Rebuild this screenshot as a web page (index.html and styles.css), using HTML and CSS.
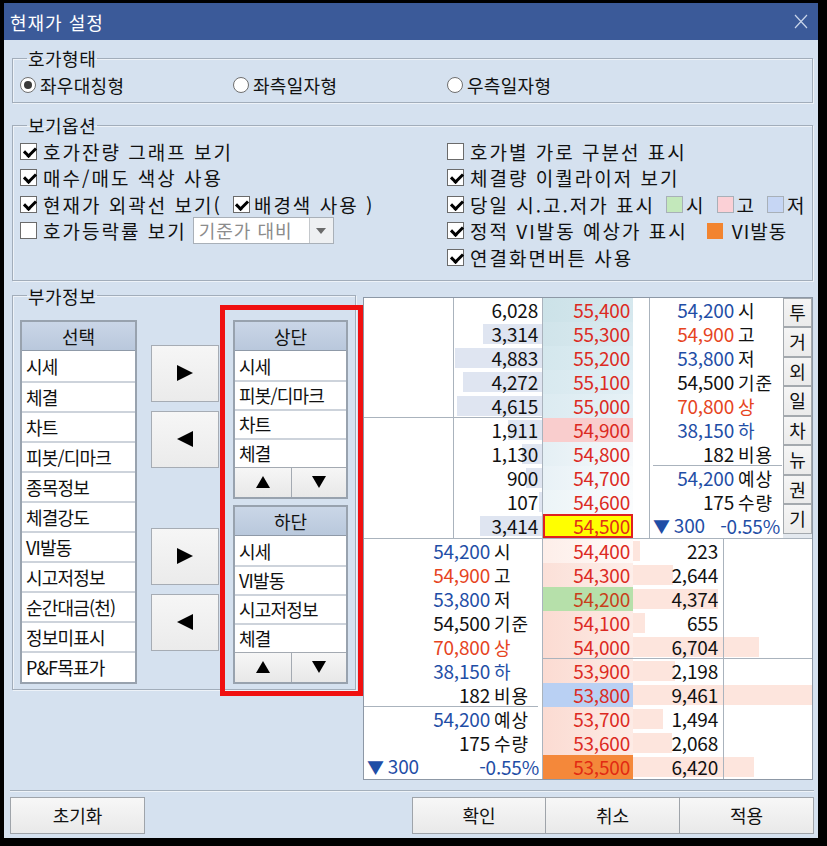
FILE: index.html
```html
<!DOCTYPE html>
<html lang="ko">
<head>
  <meta charset="UTF-8">
  <meta name="viewport" content="width=device-width, initial-scale=1">
  <title>현재가 설정</title>
  <link rel="stylesheet" href="styles.css">
</head>
<body>
  <div class="window">
    <div class="titlebar">
      <span class="title">현재가 설정</span>
      <svg class="close" width="14" height="15" viewBox="0 0 14 15"><path d="M1 1L13 14M13 1L1 14" stroke="#c9d5ea" stroke-width="1.2" fill="none"/></svg>
    </div>

    <div class="content">
      <!-- 호가형태 -->
      <fieldset class="group type-group">
        <legend>호가형태</legend>
        <div class="radios">
          <div class="radio on"><i></i>좌우대칭형</div>
          <div class="radio"><i></i>좌측일자형</div>
          <div class="radio"><i></i>우측일자형</div>
        </div>
      </fieldset>

      <!-- 보기옵션 -->
      <fieldset class="group view-group">
        <legend>보기옵션</legend>
        <div class="opts">
          <div class="col">
            <div class="opt"><i class="chk on"></i>호가잔량 그래프 보기</div>
            <div class="opt"><i class="chk on"></i>매수/매도 색상 사용</div>
            <div class="opt"><i class="chk on"></i>현재가 외곽선 보기(<i class="chk on inner"></i>배경색 사용 )</div>
            <div class="opt"><i class="chk"></i>호가등락률 보기<div class="combo"><span>기준가 대비</span><b></b></div></div>
          </div>
          <div class="col">
            <div class="opt"><i class="chk"></i>호가별 가로 구분선 표시</div>
            <div class="opt"><i class="chk on"></i>체결량 이퀄라이저 보기</div>
            <div class="opt"><i class="chk on"></i>당일 시.고.저가 표시<i class="sw open first"></i>시<i class="sw high"></i>고<i class="sw low"></i>저</div>
            <div class="opt"><i class="chk on"></i>정적 VI발동 예상가 표시<i class="sw vi"></i><span class="vi-txt">VI발동</span></div>
            <div class="opt"><i class="chk on"></i>연결화면버튼 사용</div>
          </div>
        </div>
      </fieldset>

      <div class="extra">
        <!-- 부가정보 -->
        <fieldset class="group extra-group">
          <legend>부가정보</legend>
          <div class="lists">
            <div class="list pick">
              <div class="head">선택</div>
              <div class="item">시세</div>
              <div class="item">체결</div>
              <div class="item">차트</div>
              <div class="item">피봇/디마크</div>
              <div class="item">종목정보</div>
              <div class="item">체결강도</div>
              <div class="item">VI발동</div>
              <div class="item">시고저정보</div>
              <div class="item">순간대금(천)</div>
              <div class="item">정보미표시</div>
              <div class="item">P&amp;F목표가</div>
            </div>

            <div class="movers">
              <div class="mv add"><i></i></div>
              <div class="mv del"><i></i></div>
              <div class="mv add second"><i></i></div>
              <div class="mv del"><i></i></div>
            </div>

            <div class="slots">
              <div class="list slot">
                <div class="head">상단</div>
                <div class="item">시세</div>
                <div class="item">피봇/디마크</div>
                <div class="item">차트</div>
                <div class="item">체결</div>
                <div class="updown"><span class="up"><i></i></span><span class="down"><i></i></span></div>
              </div>
              <div class="list slot">
                <div class="head">하단</div>
                <div class="item">시세</div>
                <div class="item">VI발동</div>
                <div class="item">시고저정보</div>
                <div class="item">체결</div>
                <div class="updown"><span class="up"><i></i></span><span class="down"><i></i></span></div>
              </div>
            </div>
          </div>
        </fieldset>

        <!-- 호가 미리보기 -->
        <div class="book">
          <div class="half top">
            <div class="blank"><div class="blk"></div><div class="blk"></div></div>

            <div class="asks">
              <div class="r"><span class="n">6,028</span></div>
              <div class="r"><b class="bar" style="width:59px"></b><span class="n">3,314</span></div>
              <div class="r"><b class="bar" style="width:87px"></b><span class="n">4,883</span></div>
              <div class="r"><b class="bar" style="width:79px"></b><span class="n">4,272</span></div>
              <div class="r sep5"><b class="bar" style="width:85px"></b><span class="n">4,615</span></div>
              <div class="r"><b class="bar" style="width:34px"></b><span class="n">1,911</span></div>
              <div class="r"><b class="bar" style="width:20px"></b><span class="n">1,130</span></div>
              <div class="r"><b class="bar" style="width:16px"></b><span class="n">900</span></div>
              <div class="r"><b class="bar" style="width:3px"></b><span class="n">107</span></div>
              <div class="r"><b class="bar" style="width:62px"></b><span class="n">3,414</span></div>
            </div>

            <div class="prices">
              <div class="r p a1">55,400</div>
              <div class="r p a2">55,300</div>
              <div class="r p a3">55,200</div>
              <div class="r p a4">55,100</div>
              <div class="r p a5">55,000</div>
              <div class="r p hi">54,900</div>
              <div class="r p a7">54,800</div>
              <div class="r p a8">54,700</div>
              <div class="r p a9">54,600</div>
              <div class="r p cur">54,500</div>
            </div>

            <div class="pad"></div>

            <div class="info short">
              <div class="r"><span class="n blue">54,200</span><span class="lb">시</span></div>
              <div class="r"><span class="n red">54,900</span><span class="lb">고</span></div>
              <div class="r"><span class="n blue">53,800</span><span class="lb">저</span></div>
              <div class="r"><span class="n">54,500</span><span class="lb">기준</span></div>
              <div class="r"><span class="n red">70,800</span><span class="lb red">상</span></div>
              <div class="r"><span class="n blue">38,150</span><span class="lb blue">하</span></div>
              <div class="r sep7"><span class="n">182</span><span class="lb">비용</span></div>
              <div class="r"><span class="n blue">54,200</span><span class="lb">예상</span></div>
              <div class="r"><span class="n">175</span><span class="lb">수량</span></div>
              <div class="r chg"><span class="blue"><em>▼</em> 300</span><span class="blue">-0.55%</span></div>
            </div>

            <div class="tabs">
              <div class="tab">투</div>
              <div class="tab">거</div>
              <div class="tab">외</div>
              <div class="tab">일</div>
              <div class="tab">차</div>
              <div class="tab">뉴</div>
              <div class="tab">권</div>
              <div class="tab">기</div>
            </div>
          </div>

          <div class="half bottom">
            <div class="info wide">
              <div class="r"><span class="n blue">54,200</span><span class="lb">시</span></div>
              <div class="r"><span class="n red">54,900</span><span class="lb">고</span></div>
              <div class="r"><span class="n blue">53,800</span><span class="lb">저</span></div>
              <div class="r"><span class="n">54,500</span><span class="lb">기준</span></div>
              <div class="r"><span class="n red">70,800</span><span class="lb red">상</span></div>
              <div class="r"><span class="n blue">38,150</span><span class="lb blue">하</span></div>
              <div class="r sep7"><span class="n">182</span><span class="lb">비용</span></div>
              <div class="r"><span class="n blue">54,200</span><span class="lb">예상</span></div>
              <div class="r"><span class="n">175</span><span class="lb">수량</span></div>
              <div class="r chg"><span class="blue"><em>▼</em> 300</span><span class="blue">-0.55%</span></div>
            </div>

            <div class="prices">
              <div class="r p b1">54,400</div>
              <div class="r p b2">54,300</div>
              <div class="r p open">54,200</div>
              <div class="r p bid">54,100</div>
              <div class="r p bid sep5">54,000</div>
              <div class="r p bid">53,900</div>
              <div class="r p low">53,800</div>
              <div class="r p bid">53,700</div>
              <div class="r p bid">53,600</div>
              <div class="r p vi">53,500</div>
            </div>

            <div class="bids">
              <div class="r"><b class="bar" style="width:7px"></b><span class="n">223</span></div>
              <div class="r"><b class="bar" style="width:40px"></b><span class="n">2,644</span></div>
              <div class="r"><b class="bar" style="width:85px"></b><span class="n">4,374</span></div>
              <div class="r"><b class="bar" style="width:12px"></b><span class="n">655</span></div>
              <div class="r sep5"><b class="bar" style="width:126px"></b><span class="n">6,704</span></div>
              <div class="r"><b class="bar" style="width:42px"></b><span class="n">2,198</span></div>
              <div class="r"><b class="bar" style="width:179px"></b><span class="n">9,461</span></div>
              <div class="r"><b class="bar" style="width:30px"></b><span class="n">1,494</span></div>
              <div class="r"><b class="bar" style="width:39px"></b><span class="n">2,068</span></div>
              <div class="r"><b class="bar" style="width:121px"></b><span class="n">6,420</span></div>
            </div>
          </div>
        </div>
      </div>

      <div class="footer">
        <div class="btn">초기화</div>
        <div class="btn-group">
          <div class="btn">확인</div>
          <div class="btn">취소</div>
          <div class="btn">적용</div>
        </div>
      </div>
    </div>

    <!-- 상단/하단 영역 강조 -->
    <div class="mark"></div>
  </div>
</body>
</html>
```

FILE: styles.css
```css
/* 기본 */
* {
  box-sizing: border-box;
}
body {
  margin: 0;
  background: #000;
  font-family: "Noto Sans CJK KR", sans-serif;
  font-size: 18px;
  color: #111;
}
i, b, em {
  font-style: normal;
  font-weight: normal;
}

/* 창 */
.window {
  position: relative;
  width: 827px;
  height: 846px;
  border-style: solid;
  border-color: #000;
  border-width: 3px 9px 8px 4px;
  background: #d5e1ef;
  display: flex;
  flex-direction: column;
}
.titlebar {
  height: 37px;
  flex: none;
  background: #3b5a99;
  color: #fff;
  display: flex;
  align-items: center;
  justify-content: space-between;
  padding: 0 10px 0 6px;
}
.title {
  font-size: 18px;
  letter-spacing: 1px;
}
.content {
  flex: 1;
  padding: 8px 5px 0 8px;
  display: flex;
  flex-direction: column;
}

/* 그룹박스 */
.group {
  margin: 0;
  padding: 0 7px;
  border: 1px solid #a2adba;
  box-shadow: inset 1px 1px 0 #edf2f8, 1px 1px 0 #edf2f8;
  min-width: 0;
}
.group legend {
  margin-left: 7px;
  padding: 0 1px;
  line-height: 20px;
  font-size: 18px;
  letter-spacing: .5px;
}
.type-group {
  padding-bottom: 6px;
}
.view-group {
  margin-top: 12px;
  padding-bottom: 9px;
}

/* 라디오 */
.radios {
  display: grid;
  grid-template-columns: 213px 214px auto;
  margin-top: 6px;
}
.radio {
  display: flex;
  align-items: center;
  gap: 4px;
  height: 22px;
  letter-spacing: .3px;
}
.radio i {
  position: relative;
  width: 16px;
  height: 16px;
  border-radius: 50%;
  border: 1px solid #6f6f6f;
  background: #fff;
}
.radio.on i::after {
  content: "";
  position: absolute;
  left: 3px;
  top: 3px;
  width: 8px;
  height: 8px;
  border-radius: 50%;
  background: #3a3a3a;
}

/* 체크박스 옵션 */
.opts {
  display: grid;
  grid-template-columns: 427px auto;
  margin-top: 3px;
}
.opt {
  height: 26.5px;
  display: flex;
  align-items: center;
  font-size: 19px;
  letter-spacing: 2px;
  white-space: nowrap;
}
.chk {
  position: relative;
  flex: none;
  width: 17px;
  height: 17px;
  border: 1px solid #6b6b6b;
  background: #fff;
  margin-right: 6px;
}
.chk.on::after {
  content: "";
  position: absolute;
  left: 4.5px;
  top: 1px;
  width: 5px;
  height: 9px;
  border: solid #000;
  border-width: 0 3px 3px 0;
  transform: rotate(45deg);
}
.chk.inner {
  margin-left: 11px;
  margin-right: 4px;
}
.combo {
  display: flex;
  width: 141px;
  height: 27px;
  margin-left: 6px;
  border: 1px solid #a9b0b8;
  background: #fff;
  color: #8c8c8c;
  font-size: 18px;
  letter-spacing: 1px;
}
.combo span {
  flex: 1;
  padding-left: 5px;
  line-height: 25px;
}
.combo b {
  width: 24px;
  border-left: 1px solid #c4c8cc;
  background: #eef0f2;
  display: flex;
  align-items: center;
  justify-content: center;
}
.combo b::after {
  content: "";
  border-style: solid;
  border-color: #6b6b6b transparent transparent;
  border-width: 6px 5px 0;
}
.sw {
  flex: none;
  width: 17px;
  height: 17px;
  border: 1px solid #a8b0b8;
  margin: 0 3px 0 11px;
}
.sw.open { background: #c3e8bb; }
.sw.high { background: #fbd0d6; }
.sw.low { background: #c6d6f4; }
.sw.vi {
  width: 16px;
  height: 16px;
  border: none;
  background: #f2842f;
  margin: 0 9px 0 19px;
}
.vi-txt {
  letter-spacing: 1px;
}

/* 부가정보 */
.extra {
  display: flex;
  align-items: flex-start;
  gap: 7px;
  margin-top: 5px;
}
.extra-group {
  flex: none;
  width: 344px;
  padding-bottom: 5px;
}
.lists {
  display: flex;
  gap: 14px;
  margin-top: 14px;
}
.list {
  border: 2px solid #98a2ae;
  background: #fff;
}
.list .head {
  height: 29px;
  line-height: 28px;
  text-align: center;
  background: linear-gradient(#cad6e7, #b9c8dc);
  border-bottom: 1px solid #8f9aa8;
}
.list .item {
  height: 30px;
  line-height: 28px;
  padding-left: 4px;
  border-top: 2px solid #cdd3db;
  letter-spacing: -.8px;
  white-space: nowrap;
  overflow: hidden;
}
.list .head + .item {
  border-top: none;
  line-height: 30px;
}
.pick {
  width: 117px;
}
.slots {
  display: flex;
  flex-direction: column;
  gap: 6px;
}
.slot {
  width: 115px;
}
.slot .item {
  height: 29px;
  line-height: 27px;
}
.updown {
  display: flex;
  height: 30px;
  border-top: 1px solid #a4aab2;
}
.updown span {
  flex: 1;
  display: flex;
  align-items: center;
  justify-content: center;
  background: linear-gradient(#f6f6f6, #e8e8e8);
}
.updown .up {
  flex: 59;
  border-right: 1px solid #a4aab2;
}
.updown .down {
  flex: 56;
}
.updown .up i {
  border-style: solid;
  border-color: transparent transparent #000;
  border-width: 0 7px 12px;
}
.updown .down i {
  border-style: solid;
  border-color: #000 transparent transparent;
  border-width: 12px 7px 0;
}

/* 이동 버튼 */
.movers {
  width: 68px;
  padding-top: 25px;
  display: flex;
  flex-direction: column;
  gap: 9px;
}
.mv {
  height: 57px;
  border: 1px solid #a6acb4;
  background: linear-gradient(#f6f6f6, #ebebeb);
  display: flex;
  align-items: center;
  justify-content: center;
}
.mv.second {
  margin-top: 51px;
}
.mv.add i {
  border-style: solid;
  border-color: transparent transparent transparent #000;
  border-width: 8px 0 8px 16px;
}
.mv.del i {
  border-style: solid;
  border-color: transparent #000 transparent transparent;
  border-width: 8px 16px 8px 0;
}

/* 호가창 */
.book {
  flex: none;
  width: 450px;
  margin-top: 11px;
  border: 1px solid #8d98a6;
  background: #fff;
}
.half {
  display: flex;
}
.half.top {
  height: 241px;
  border-bottom: 1px solid #aab3bd;
}
.half.bottom {
  height: 240px;
}
.r {
  position: relative;
  height: 24px;
  line-height: 24px;
  display: flex;
  align-items: center;
  white-space: nowrap;
}
.n {
  position: relative;
  font-size: 19px;
  letter-spacing: -.2px;
}
.blue { color: #1f4ea6; }
.red { color: #e6441e; }

.blank {
  width: 90px;
  border-right: 1px solid #aab3bd;
}
.blk {
  height: 120px;
}
.blk:first-child {
  box-shadow: inset 0 -1px #aab3bd;
}
.asks {
  width: 89px;
  border-right: 1px solid #aab3bd;
}
.asks .r {
  justify-content: flex-end;
  padding-right: 4px;
}
.asks .bar {
  position: absolute;
  right: 0;
  top: 2px;
  bottom: 2px;
  background: #dfe5f1;
}
.sep5 {
  box-shadow: inset 0 -1px #aab3bd;
}

.prices {
  width: 90px;
}
.p {
  justify-content: flex-end;
  padding-right: 3px;
  color: #dc2a22;
  font-size: 19px;
  letter-spacing: -.2px;
}
.a1 { background: linear-gradient(90deg, #cce2e8, #d6e8ee); }
.a2 { background: linear-gradient(90deg, #d0e4ea, #daeaf0); }
.a3 { background: linear-gradient(90deg, #d4e7ed, #deedf3); }
.a4 { background: linear-gradient(90deg, #d8e9ef, #e2eff5); }
.a5 { background: linear-gradient(90deg, #dcebf1, #e6f1f6); }
.hi { background: #f9cdcd; }
.a7 { background: linear-gradient(90deg, #e4eff4, #f6f9fb); }
.a8 { background: linear-gradient(90deg, #e8f1f6, #f8fbfc); }
.a9 { background: linear-gradient(90deg, #ecf4f7, #fafcfd); }
.cur {
  background: #ffff00;
  box-shadow: inset 0 0 0 2px #e02020;
  color: #e03018;
}
.b1 { background: linear-gradient(90deg, #fdeee9, #fffaf8); }
.b2 { background: linear-gradient(90deg, #fbe0d8, #fdeee9); }
.open { background: #b6e0aa; color: #c8401a; }
.bid { background: linear-gradient(90deg, #fbdbd2, #fdebe5); }
.bid.sep5 { box-shadow: inset 0 -1px #aab3bd; }
.low { background: #b9d0f3; }
.vi { background: #f4883a; color: #e22a12; }

.pad {
  width: 17px;
  border-right: 1px solid #aab3bd;
}
.info .r {
  display: grid;
  align-items: center;
}
.info .n {
  text-align: right;
}
.info .lb {
  padding-left: 4px;
  letter-spacing: 1px;
}
.info.short {
  width: 133px;
}
.info.short .r {
  grid-template-columns: 84px auto;
}
.info.wide {
  width: 179px;
  border-right: 1px solid #aab3bd;
}
.info.wide .r {
  grid-template-columns: 126px auto;
}
.sep7::after {
  content: "";
  position: absolute;
  left: 3px;
  right: 1px;
  bottom: 0;
  height: 1px;
  background: #aab3bd;
}
.info.wide .sep7::after {
  left: 0;
  right: 4px;
}
.info .chg {
  display: flex;
  justify-content: space-between;
  padding: 0 3px 0 3px;
  font-size: 19px;
  letter-spacing: -.2px;
}
.chg em {
  font-size: 17px;
}

.tabs {
  width: 29px;
  background: #e4e9ef;
}
.tab {
  height: 29.5px;
  line-height: 27px;
  text-align: center;
  border: 1px solid #a4a9ae;
  background: linear-gradient(#f5f5f5, #ebebeb);
}

.bids {
  position: relative;
  width: 179px;
}
.bids::after {
  content: "";
  position: absolute;
  left: 90px;
  top: 0;
  bottom: 0;
  width: 1px;
  background: #aab3bd;
  z-index: 2;
}
.bids .n {
  width: 85px;
  text-align: right;
}
.bids .bar {
  position: absolute;
  left: 0;
  top: 2px;
  bottom: 2px;
  background: #fde5dd;
}

/* 하단 버튼 */
.footer {
  display: flex;
  justify-content: space-between;
  margin: 10px -1px 0 -2px;
  padding-top: 6px;
  border-top: 1px solid #a5b0bc;
  box-shadow: inset 0 1px #eef3f8;
}
.btn {
  width: 135px;
  height: 37px;
  border: 1px solid #9fa4aa;
  background: linear-gradient(#f7f7f7, #e9e9e9);
  display: flex;
  align-items: center;
  justify-content: center;
}
.btn-group {
  display: flex;
}
.btn-group .btn {
  width: 134px;
}
.btn-group .btn + .btn {
  border-left: none;
}

/* 강조 테두리 */
.mark {
  position: absolute;
  left: 216px;
  top: 302px;
  width: 143px;
  height: 391px;
  border: 5px solid #f01010;
  pointer-events: none;
}
```
